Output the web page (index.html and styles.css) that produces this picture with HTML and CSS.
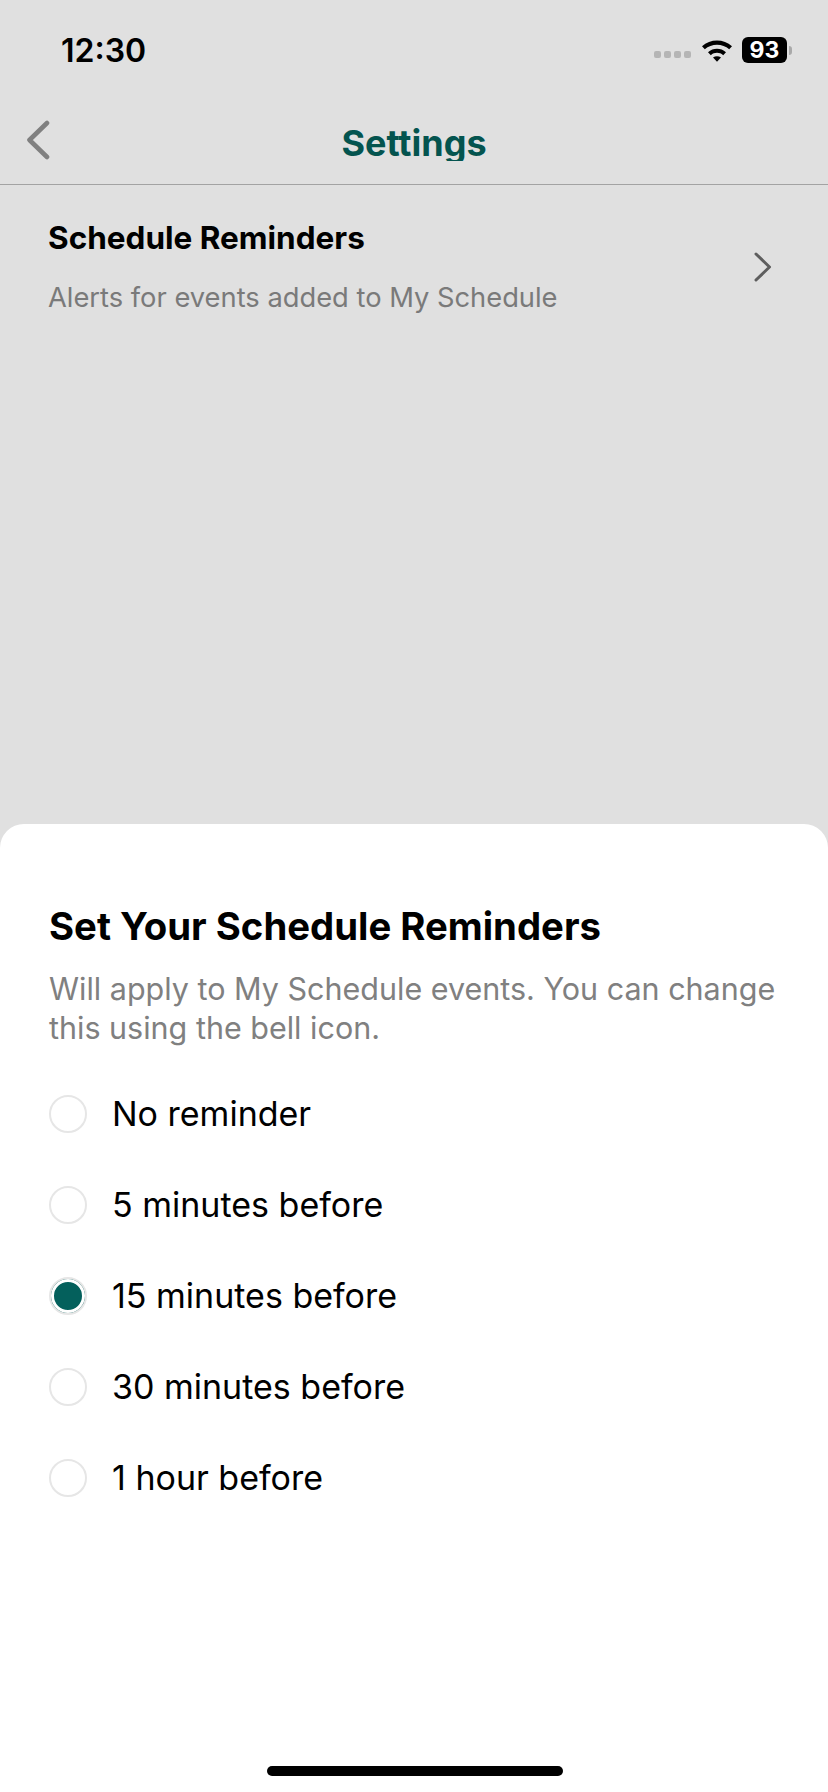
FILE: index.html
```html
<!DOCTYPE html>
<html lang="en">
<head>
    <meta charset="UTF-8">
    <meta name="viewport" content="width=device-width, initial-scale=1.0">
    <title>Settings</title>
    <link rel="stylesheet" href="styles.css">
</head>
<body>

    <div class="screen">
        <div class="status-bar">
            <span class="time">12:30</span>
            <div class="status-icons">
                <div class="signal">
                    <span class="dot"></span><span class="dot"></span><span class="dot"></span><span class="dot"></span>
                </div>
                <svg class="wifi" width="32" height="24" viewBox="0 0 32 24">
                    <path d="M1 8.2C9.2 .6 22.8 .6 31 8.2l-2.8 3C21.6 5.2 10.4 5.2 3.800 11.200Z" fill="#000"/>
                    <path d="M7 14.200C12.200 9.600 19.800 9.600 25 14.200l-2.800 3C18.600 14 13.400 14 9.800 17.200Z" fill="#000"/>
                    <path d="M12 19.600C14.400 17.800 17.600 17.800 20 19.600l-4 4.200Z" fill="#000"/>
                </svg>
                <div class="battery">
                    <span class="battery-level">93</span>
                    <span class="battery-cap"></span>
                </div>
            </div>
        </div>

        <nav class="top-nav">
            <svg class="back" width="26" height="40" viewBox="0 0 26 40">
                <path d="M22 3 4.500 20 22 37" fill="none" stroke="#808080" stroke-width="4.600" stroke-linecap="round" stroke-linejoin="round"/>
            </svg>
            <h1 class="nav-title">Settings</h1>
        </nav>

        <div class="settings-row">
            <div class="settings-text">
                <h2 class="row-title">Schedule Reminders</h2>
                <p class="row-sub">Alerts for events added to My Schedule</p>
            </div>
            <svg class="chevron" width="18" height="30" viewBox="0 0 18 30">
                <path d="M2 2 15.500 15 2 28" fill="none" stroke="#5e5e5e" stroke-width="3" stroke-linecap="round" stroke-linejoin="round"/>
            </svg>
        </div>

        <div class="sheet">
            <h2 class="sheet-title">Set Your Schedule Reminders</h2>
            <p class="sheet-sub">Will apply to My Schedule events. You can change this using the bell icon.</p>

            <div class="options">
                <div class="option"><span class="radio"></span>No reminder</div>
                <div class="option"><span class="radio"></span>5 minutes before</div>
                <div class="option"><span class="radio selected"></span>15 minutes before</div>
                <div class="option"><span class="radio"></span>30 minutes before</div>
                <div class="option"><span class="radio"></span>1 hour before</div>
            </div>

            <div class="home-bar"></div>
        </div>
    </div>

</body>
</html>
```

FILE: styles.css
```css
body {
    margin: 0;
    padding: 0;
    font-family: Inter, "Liberation Sans", sans-serif;
    color: #000;
}

.screen {
    width: 828px;
    height: 1792px;
    background-color: #e0e0e0;
    display: flex;
    flex-direction: column;
    overflow: hidden;
}

/* status bar */
.status-bar {
    height: 100px;
    flex-shrink: 0;
    display: flex;
    justify-content: space-between;
    align-items: center;
    padding: 0 36px 0 61px;
    box-sizing: border-box;
}

.time {
    font-size: 32px;
    font-weight: 600;
}

.status-icons {
    display: flex;
    align-items: center;
}

.signal {
    display: flex;
    gap: 3px;
    margin-top: 8px;
    margin-right: 10px;
}

.dot {
    width: 7px;
    height: 7px;
    border-radius: 2px;
    background-color: #b5b5b5;
}

.wifi {
    margin-right: 9px;
}

.battery {
    display: flex;
    align-items: center;
}

.battery-level {
    width: 45px;
    height: 26px;
    background-color: #000;
    border-radius: 6px;
    color: #fff;
    font-size: 23px;
    font-weight: 700;
    line-height: 26px;
    text-align: center;
}

.battery-cap {
    width: 3px;
    height: 9px;
    margin-left: 2px;
    background-color: #a9a9a9;
    border-radius: 0 3px 3px 0;
}

/* nav */
.top-nav {
    height: 84px;
    flex-shrink: 0;
    display: flex;
    align-items: flex-start;
    justify-content: center;
    border-bottom: 1px solid #a3a3a3;
    position: relative;
}

.back {
    position: absolute;
    left: 25px;
    top: 20px;
}

/* bottom of the g is cut off in the app */
.nav-title {
    margin: 23px 0 0;
    height: 38px;
    overflow: hidden;
    font-size: 36px;
    line-height: 41px;
    font-weight: 700;
    color: #04544f;
}

/* settings row */
.settings-row {
    flex-shrink: 0;
    display: flex;
    justify-content: space-between;
    align-items: center;
    padding: 35px 56px 0 48px;
}

.row-title {
    margin: 0;
    font-size: 31.500px;
    line-height: 36px;
    font-weight: 700;
}

.row-sub {
    margin: 26px 0 0;
    font-size: 27.300px;
    line-height: 32px;
    color: #7a7a7a;
}

.chevron {
    margin-top: 0;
}

/* bottom sheet */
.sheet {
    margin-top: auto;
    height: 968px;
    box-sizing: border-box;
    background-color: #fff;
    border-radius: 24px 24px 0 0;
    padding: 80px 48px 0 49px;
    display: flex;
    flex-direction: column;
}

.sheet-title {
    margin: 0;
    font-size: 38.300px;
    line-height: 44px;
    font-weight: 700;
}

.sheet-sub {
    margin: 21px 0 0;
    font-size: 30.500px;
    line-height: 39px;
    color: #808080;
}

.options {
    margin-top: 21px;
    display: flex;
    flex-direction: column;
}

.option {
    height: 91px;
    display: flex;
    align-items: center;
    gap: 25px;
    font-size: 34px;
}

.radio {
    width: 38px;
    height: 38px;
    box-sizing: border-box;
    border: 2px solid #e6e6e6;
    border-radius: 50%;
    background-color: #fff;
}

.radio.selected {
    background-color: #04605c;
    box-shadow: inset 0 0 0 3px #fff;
}

.home-bar {
    width: 296px;
    height: 10px;
    margin: auto auto 16px;
    background-color: #000;
    border-radius: 5px;
}
```
